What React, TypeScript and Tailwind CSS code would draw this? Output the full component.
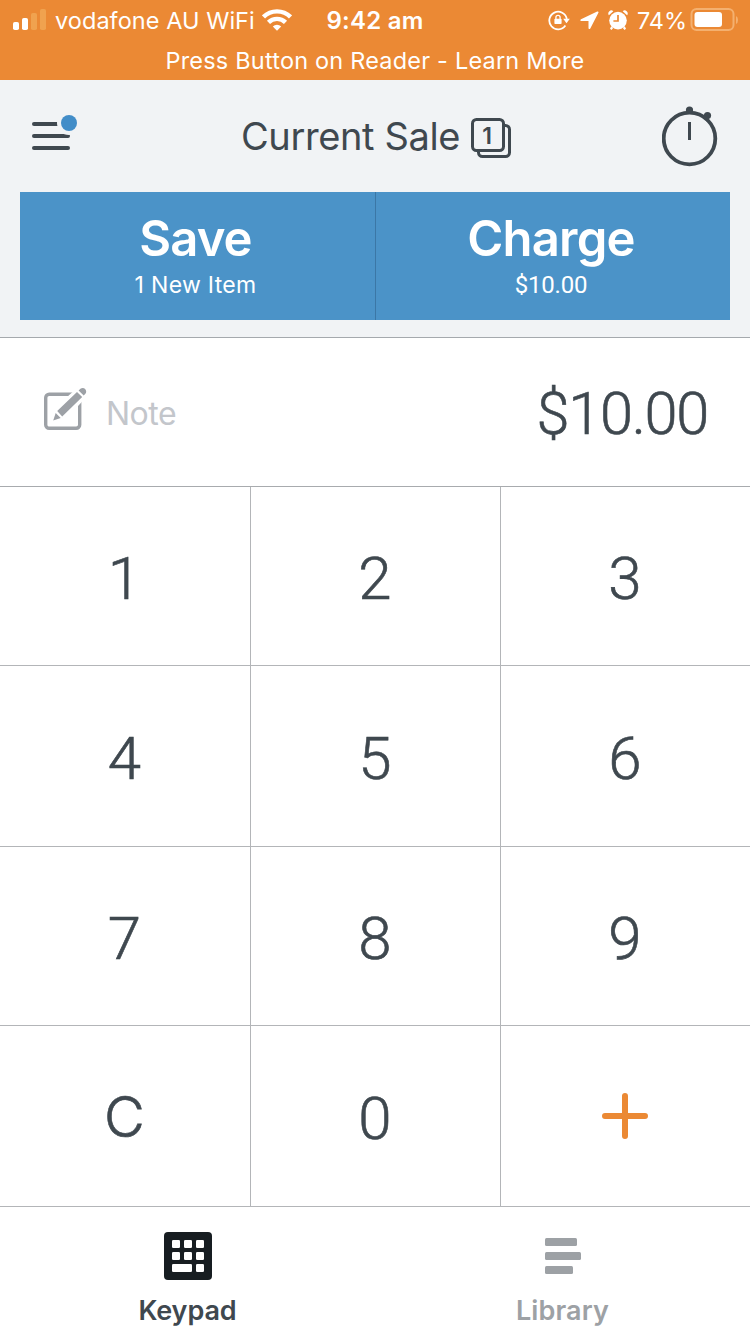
import type { ReactNode } from "react";

const StatusBar = () => {
  return (
    <div className="h-20 bg-[#eb8934] font-['Inter',sans-serif] text-white">
      <div className="grid h-10 grid-cols-[300px_150px_300px] items-center">
        <div className="flex items-center pl-[13px]">
          <svg
            width="34"
            height="22"
            viewBox="0 0 34 22"
            fill="white"
            className="-mt-0.5 shrink-0"
          >
            <rect x="0" y="14" width="6" height="8" rx="1.8" />
            <rect x="9" y="10" width="6" height="12" rx="1.8" />
            <rect x="18" y="5" width="6" height="17" rx="1.8" fill="#f0a24f" />
            <rect x="27" y="1" width="6" height="21" rx="1.8" fill="#f0a24f" />
          </svg>
          <span className="ml-2 pt-0.5 text-[23.5px] tracking-[0.05px] whitespace-nowrap">
            vodafone AU WiFi
          </span>
          <svg
            width="30"
            height="22"
            viewBox="0 0 30 22"
            className="ml-[7px] shrink-0"
            fill="none"
            stroke="white"
            strokeWidth="4.4"
          >
            <path d="M1.5 7.9a19.2 19.2 0 0 1 27 0" />
            <path d="M6.5 13.4a12 12 0 0 1 17 0" />
            <path d="M10.8 17.4a6 6 0 0 1 8.4 0L15 21.8Z" fill="white" stroke="none" />
          </svg>
        </div>
        <div className="pt-0.5 text-center text-2xl font-semibold tracking-[0.25px]">9:42 am</div>
        <div className="flex items-center pl-[98px]">
          <svg
            width="22"
            height="22"
            viewBox="0 0 22 22"
            fill="none"
            stroke="white"
            className="shrink-0"
          >
            <path d="M17.4 16.5a8.8 8.8 0 1 1 1.4-6.5" strokeWidth="1.8" />
            <path d="M15.2 9.8h6.6l-3.3 4.4Z" fill="white" stroke="none" />
            <rect x="6.4" y="9.7" width="7.2" height="5.4" rx="0.8" fill="white" stroke="none" />
            <path d="M7.9 10V8.4a2.1 2.1 0 0 1 4.2 0V10" strokeWidth="1.3" />
          </svg>
          <svg
            width="19"
            height="19"
            viewBox="0 0 19 19"
            className="ml-2.5 shrink-0"
            fill="white"
          >
            <path d="M17.2 0.6 1 8.3c-1.1.6-.8 1.8.5 1.8h7v6.9c0 1.2 1.2 1.5 1.8.4L18.4 1.8c.4-1-.2-1.6-1.2-1.2Z" />
          </svg>
          <svg width="20" height="20" viewBox="0 0 20 20" className="ml-[9px] shrink-0" fill="white">
            <circle cx="10" cy="10.6" r="8.8" />
            <path d="M0.9 5.2a3 3 0 0 1 4.4-4ZM19.1 5.2a3 3 0 0 0-4.4-4Z" />
            <path d="m3.2 16.2 2 1.8-1.7 2-1.5-1.2ZM16.8 16.2l-2 1.8 1.7 2 1.5-1.2Z" />
            <path d="M10 5v6H5.4" fill="none" stroke="#eb8934" strokeWidth="1.7" />
          </svg>
          <span className="ml-[9px] pt-0.5 text-[23.5px] tracking-[-0.1px]">74%</span>
          <svg width="50" height="24" viewBox="0 0 50 24" className="ml-[3px] shrink-0" fill="none">
            <rect x="1.5" y="1" width="42" height="21" rx="5" stroke="#f4b06f" strokeWidth="2" />
            <rect x="4.5" y="4" width="27.5" height="15" rx="3" fill="white" />
            <path d="M46 8v8q2-1 2-4t-2-4Z" fill="#f4b06f" />
          </svg>
        </div>
      </div>
      <div className="flex h-10 items-center justify-center pt-0.5 text-[23.5px] tracking-[0.2px]">
        Press Button on Reader - Learn More
      </div>
    </div>
  );
};

const Header = () => {
  return (
    <header className="h-[258px] border-b border-[#a5a9ad] bg-[#f1f3f5]">
      <div className="flex h-28 items-center justify-between pr-8 pl-8">
        <svg width="46" height="38" viewBox="0 0 46 38" fill="#3f484f" className="-mt-1.5">
          <rect y="8" width="38" height="4" rx="2" />
          <rect y="20" width="38" height="4" rx="2" />
          <rect y="32" width="38" height="4" rx="2" />
          <circle cx="37" cy="9" r="12" fill="#f1f3f5" />
          <circle cx="37" cy="9" r="8" fill="#428dc8" />
        </svg>
        <div className="ml-[13px] flex items-center">
          <h1 className="text-[38px] leading-none tracking-[-0.37px] text-[#3f484f]">
            Current Sale
          </h1>
          <svg
            width="42"
            height="42"
            viewBox="0 0 42 42"
            className="mt-1 ml-2.5"
            fill="none"
            stroke="#3f484f"
            strokeWidth="3"
          >
            <rect x="2.5" y="2.5" width="31" height="31" rx="4" />
            <path d="M33.5 8.5h2a4 4 0 0 1 4 4v23a4 4 0 0 1-4 4h-23a4 4 0 0 1-4-4v-2" />
            <text
              x="17"
              y="27"
              textAnchor="middle"
              fill="#3f484f"
              stroke="none"
              className="font-['Inter'] text-[23px] font-semibold"
            >
              1
            </text>
          </svg>
        </div>
        <svg width="56" height="62" viewBox="0 0 56 62" fill="#3f484f">
          <circle cx="27.5" cy="33.5" r="25.8" fill="none" stroke="#3f484f" strokeWidth="3.8" />
          <circle cx="27.5" cy="5" r="3.6" />
          <circle cx="45.5" cy="10.5" r="3.6" />
          <path d="m41 12 4-2 2 4-2 3ZM24 5h7v4h-7Z" />
          <rect x="26" y="17" width="3" height="18" />
        </svg>
      </div>
      <div className="mx-5 grid h-32 grid-cols-[356px_354px] bg-[#4b93c8] text-white">
        <button className="flex flex-col items-center border-r border-[#3b77a6] pr-1 pt-[19px]">
          <span className="text-[49px] leading-[56px] font-semibold tracking-[-0.9px]">Save</span>
          <span className="mt-0.5 text-[23px] leading-8 tracking-[0.3px]">1 New Item</span>
        </button>
        <button className="flex flex-col items-center pr-1 pt-[19px]">
          <span className="text-[49px] leading-[56px] font-semibold tracking-[-0.8px]">
            Charge
          </span>
          <span className="mt-0.5 font-['Roboto'] text-[24px] leading-8 tracking-[-0.2px]">
            $10.00
          </span>
        </button>
      </div>
    </header>
  );
};

const AmountRow = () => {
  return (
    <div className="flex h-[149px] items-center justify-between border-b border-[#a8abae] pr-[42px] pl-11">
      <div className="flex items-center">
        <svg width="43" height="43" viewBox="0 0 43 43" fill="none" className="-mt-2">
          <rect x="1.7" y="7.2" width="34" height="34" rx="3.5" stroke="#9da1a6" strokeWidth="3.4" />
          <path d="m6 37 6-17L33 1l12 6-22 24Z" fill="white" />
          <path d="M9.2 33.5 11.7 26l5 5ZM13.2 24 33 5l5.2 5-20 19.5ZM34.6 3.5l1.8-1.7c3.5-2.5 7.5 1.5 5 5l-1.7 1.7Z" fill="#9da1a6" />
        </svg>
        <span className="ml-[19px] pt-1 text-[32px] tracking-[-0.5px] text-[#c3c6cb]">Note</span>
      </div>
      <span className="pt-1.5 font-['Roboto'] text-[59.5px] leading-none font-light tracking-[-1.3px] text-[#3f484f] [-webkit-text-stroke:0.6px]">
        $10.00
      </span>
    </div>
  );
};

const Key = ({ children }: { children: ReactNode }) => {
  return (
    <button className="flex items-center justify-center border-r border-b border-[#b3b5b8] pt-1.5 pr-px font-['Roboto'] text-[60px] leading-none font-light text-[#3f484f] [-webkit-text-stroke:0.6px] nth-[3n]:border-r-0">
      {children}
    </button>
  );
};

const Keypad = () => {
  return (
    <div className="grid h-[720px] grid-cols-[251px_250px_249px] grid-rows-[179px_181px_179px_181px]">
      {["1", "2", "3", "4", "5", "6", "7", "8", "9"].map((label) => (
        <Key key={label}>{label}</Key>
      ))}
      <Key>
        <span className="-mt-1 font-['Inter'] text-[56px] font-light">C</span>
      </Key>
      <Key>0</Key>
      <Key>
        <svg
          width="46"
          height="46"
          viewBox="0 0 46 46"
          stroke="#eb8934"
          strokeWidth="6"
          strokeLinecap="round"
          className="-mt-1.5"
        >
          <path d="M3 23h40M23 3v40" />
        </svg>
      </Key>
    </div>
  );
};

const TabBar = () => {
  return (
    <nav className="grid h-[127px] grid-cols-2 text-[27px] leading-8 font-semibold">
      <button className="flex flex-col items-center pt-[25px] text-[#3f484f]">
        <svg width="48" height="48" viewBox="0 0 48 48" fill="white">
          <rect width="48" height="48" rx="4" fill="#171d21" />
          <rect x="8" y="8" width="8" height="8" rx="1.3" />
          <rect x="20" y="8" width="8" height="8" rx="1.3" />
          <rect x="32" y="8" width="8" height="8" rx="1.3" />
          <rect x="8" y="20" width="8" height="8" rx="1.3" />
          <rect x="20" y="20" width="8" height="8" rx="1.3" />
          <rect x="32" y="20" width="8" height="8" rx="1.3" />
          <rect x="8" y="32" width="20" height="8" rx="1.3" />
          <rect x="32" y="32" width="8" height="8" rx="1.3" />
        </svg>
        <span className="mt-[15px] tracking-[-0.1px]">Keypad</span>
      </button>
      <button className="flex flex-col items-center pt-[25px] text-[#9da1a5]">
        <svg width="36" height="48" viewBox="0 0 36 48" fill="#9da1a5">
          <rect y="6" width="32" height="8" rx="1.5" />
          <rect y="20" width="36" height="8" rx="1.5" />
          <rect y="34" width="28" height="8" rx="1.5" />
        </svg>
        <span className="mt-[15px] tracking-[0.15px]">Library</span>
      </button>
    </nav>
  );
};

export default function App() {
  return (
    <div className="h-[1334px] w-[750px] overflow-hidden bg-white font-['Inter',sans-serif]">
      <StatusBar />
      <Header />
      <AmountRow />
      <Keypad />
      <TabBar />
    </div>
  );
}
